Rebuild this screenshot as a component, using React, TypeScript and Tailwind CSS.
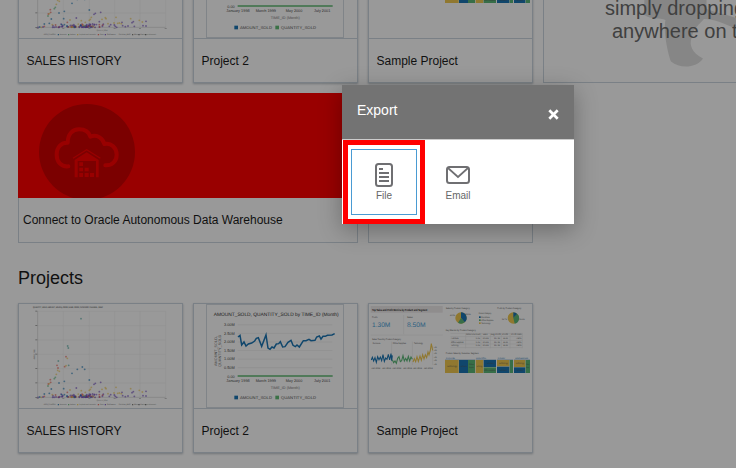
import type { ReactNode } from 'react';

const BLUE = '#1b76b4';
const GREEN = '#5cb878';
const YELLOW = '#f0c850';
const RED = '#ee5b4e';
const PURPLE = '#7048bf';
const TEAL = '#4fa8a0';

type Dot = [number, number, string];

// Outlying products of the sales scatter plot.
const outliers: Dot[] = [
  [213, 176, TEAL], [173, 258, TEAL], [175, 264, TEAL], [168, 290, RED], [172, 295, YELLOW],
  [145, 303, TEAL], [141, 316, RED], [144, 324, RED], [164, 320, RED], [168, 317, YELLOW],
  [176, 316, TEAL], [217, 321, BLUE], [224, 328, BLUE], [202, 328, BLUE], [186, 340, BLUE],
  [148, 334, YELLOW], [143, 331, YELLOW], [139, 343, YELLOW], [136, 352, GREEN], [133, 356, GREEN],
  [121, 359, RED], [122, 367, RED], [115, 372, RED], [118, 371, YELLOW], [114, 378, GREEN],
  [147, 369, BLUE], [163, 364, BLUE], [238, 360, BLUE], [161, 386, BLUE], [124, 387, BLUE],
  [118, 400, BLUE], [103, 402, BLUE], [272, 367, PURPLE], [256, 370, PURPLE], [252, 373, PURPLE],
  [244, 382, YELLOW], [241, 388, YELLOW], [238, 391, YELLOW], [199, 384, PURPLE], [180, 390, YELLOW],
  [318, 382, YELLOW], [288, 386, YELLOW], [276, 388, YELLOW], [286, 383, YELLOW], [362, 386, YELLOW],
  [388, 391, YELLOW], [397, 396, YELLOW], [408, 394, PURPLE], [370, 395, PURPLE], [366, 398, PURPLE],
  [336, 397, PURPLE], [214, 392, YELLOW], [328, 399, YELLOW], [334, 401, YELLOW], [312, 399, YELLOW],
  [323, 400, YELLOW], [172, 397, RED], [127, 404, YELLOW], [226, 397, YELLOW], [268, 395, PURPLE],
  [408, 408, PURPLE], [399, 407, PURPLE], [373, 409, PURPLE], [354, 408, PURPLE], [346, 410, PURPLE],
  [338, 407, PURPLE], [316, 409, PURPLE], [313, 405, PURPLE], [302, 404, PURPLE], [298, 409, PURPLE],
  [294, 401, YELLOW], [320, 412, PURPLE], [84, 412, PURPLE], [89, 411, BLUE], [94, 412, YELLOW],
  [99, 411, PURPLE], [103, 409, RED],
];

// Dense band of low-volume products along the horizontal axis.
const band: Dot[] = Array.from({ length: 95 }, (_, i): Dot => {
  const tones = [PURPLE, PURPLE, RED, PURPLE, BLUE, YELLOW, PURPLE];
  const noise = Math.abs(Math.sin(i * 12.9898) * 43758.5453) % 1;
  const lift = Math.abs(Math.sin(i * 78.233) * 12543.123) % 1;
  const x = i < 60 ? 128 + noise * 152 : 180 + noise * 75;
  return [x, 412 - lift * lift * 10, tones[i % 7]];
});

function ScatterThumb() {
  return (
    <svg viewBox="27 132 489 312" className="block h-[104px] w-[163px]" fontFamily="Liberation Sans, Arial, sans-serif" textRendering="geometricPrecision">
      <g stroke="#f2f2f2" strokeWidth="2">
        {[154, 197, 240, 283, 326, 369].map((y) => <path key={y} d={`M82 ${y}H467`} />)}
        {[160, 238, 314, 390, 467].map((x) => <path key={x} d={`M${x} 154V412`} />)}
      </g>
      <path d="M83 154V412H467" fill="none" stroke="#d4d4d4" strokeWidth="2" />
      <g fill="#aaa">
        {[153, 196, 239, 282, 325, 368, 412].map((y) => <rect key={y} x="76" y={y - 1} width="6" height="3" />)}
        {[83, 160, 238, 314, 390, 467].map((x) => <rect key={x} x={x - 3} y="415" width="6" height="2" />)}
      </g>
      <text x="69" y="145" fontSize="7" fontWeight="bold" fill="#666" textLength="210" lengthAdjust="spacingAndGlyphs">QUANTITY_SOLD, AMOUNT_SOLD by PROD_NAME, PROD_CATEGORY, CHANNEL_DESC</text>
      <text x="260" y="424" fontSize="6" fill="#777" textLength="32" lengthAdjust="spacingAndGlyphs">QUANTITY_SOLD</text>
      <text transform="translate(76 298) rotate(-90)" fontSize="6" fill="#888" textLength="30" lengthAdjust="spacingAndGlyphs">AMOUNT_SOLD</text>
      {[...band, ...outliers].map(([x, y, c], i) => <circle key={i} cx={x} cy={y} r="2.8" fill={c} opacity="0.62" />)}
      <g fontSize="6" fill="#777">
        <text x="101" y="436" textLength="37" lengthAdjust="spacingAndGlyphs">PROD_CATEGORY</text>
        <text x="149" y="436" textLength="21" lengthAdjust="spacingAndGlyphs">Electronics</text>
        <text x="180" y="436" textLength="17" lengthAdjust="spacingAndGlyphs">Hardware</text>
        <text x="207" y="436" textLength="51" lengthAdjust="spacingAndGlyphs">Peripherals and Accessories</text>
        <text x="269" y="436" textLength="12" lengthAdjust="spacingAndGlyphs">Photo</text>
        <text x="290" y="436" textLength="27" lengthAdjust="spacingAndGlyphs">Software</text>
        <text x="326" y="436" textLength="36" lengthAdjust="spacingAndGlyphs">CHANNEL_DESC</text>
        <text x="372" y="436" textLength="66" lengthAdjust="spacingAndGlyphs">Direct Partners Internet</text>
      </g>
      <g>
        {([[145, BLUE], [176, GREEN], [203, YELLOW], [265, RED], [286, PURPLE], [368, '#666'], [387, '#666'], [407, '#666']] as [number, string][]).map(([x, c]) => (
          <circle key={x} cx={x} cy="434" r="2" fill={c} />
        ))}
      </g>
    </svg>
  );
}

function LineThumb() {
  const ticks = ['3.00M', '2.50M', '2.00M', '1.50M', '1.00M', '0.50M', '0.00'];
  return (
    <svg viewBox="27 27 489 312" className="block h-[104px] w-[163px]" fontFamily="Liberation Sans, Arial, sans-serif" textRendering="geometricPrecision">
      <rect x="64.500" y="28.500" width="411" height="309" fill="#fff" stroke="#d5dde3" strokeWidth="3" />
      <text x="86" y="63" fontSize="14.500" fill="#333" textLength="375" lengthAdjust="spacingAndGlyphs">AMOUNT_SOLD, QUANTITY_SOLD by TIME_ID (Month)</text>
      {ticks.map((t, i) => (
        <g key={t}>
          <path d={`M158 ${89.500 + i * 25.7}H442`} stroke="#ebebeb" strokeWidth="2" />
          <text x="149" y={93.500 + i * 25.7} textAnchor="end" fontSize="11.500" fill="#4a4a4a">{t}</text>
        </g>
      ))}
      <g fill="#777" fontSize="11">
        <text transform="translate(96 213) rotate(-90)" textLength="90" lengthAdjust="spacingAndGlyphs">AMOUNT_SOLD,</text>
        <text transform="translate(109 216) rotate(-90)" textLength="97" lengthAdjust="spacingAndGlyphs">QUANTITY_SOLD</text>
        <text x="257" y="281" textLength="87" lengthAdjust="spacingAndGlyphs">TIME_ID (Month)</text>
      </g>
      <g fill="#4a4a4a" fontSize="11.500">
        <text x="124" y="262" textLength="70" lengthAdjust="spacingAndGlyphs">January 1998</text>
        <text x="212" y="262" textLength="61" lengthAdjust="spacingAndGlyphs">March 1999</text>
        <text x="302" y="262" textLength="50" lengthAdjust="spacingAndGlyphs">May 2000</text>
        <text x="387" y="262" textLength="49" lengthAdjust="spacingAndGlyphs">July 2001</text>
      </g>
      <path d="M158 243H443" stroke="#62bd75" strokeWidth="4.500" />
      <path d="M159 126l6-5 5 29 7-9 6 12 7-6 10-3 9-6 5-8 6-2 10 26 13-34 6 39 6 4 6-7 6 3 7-12 7-1 5-6 7 16 7-1 9-13 9-6 6 15 7 4 5-5 7 6 12-19 8 0 9-4 6 4 12-1 5-10 8-3 5 9 6-8 7 0 6-3 14-1 8-4" fill="none" stroke={BLUE} strokeWidth="4.500" />
      <rect x="148" y="302" width="11" height="11" fill={BLUE} />
      <rect x="271" y="302" width="11" height="11" fill="#62bd75" />
      <g fontSize="12" fill="#555">
        <text x="165" y="311" textLength="96" lengthAdjust="spacingAndGlyphs">AMOUNT_SOLD</text>
        <text x="288" y="311" textLength="105" lengthAdjust="spacingAndGlyphs">QUANTITY_SOLD</text>
      </g>
    </svg>
  );
}

type Tile = [number, number, number, number, string];
const tiles: Tile[] = [
  [255, 195, 41, 39, YELLOW], [297, 195, 27, 39, BLUE], [324, 195, 21, 39, GREEN],
  [347, 195, 23, 39, YELLOW], [371, 195, 37, 21, BLUE], [371, 217, 37, 17, GREEN],
  [411, 195, 37, 19, YELLOW], [411, 215, 37, 19, BLUE], [449, 195, 10, 39, GREEN],
  [462, 195, 34, 21, YELLOW], [462, 217, 34, 17, BLUE], [497, 195, 13, 39, GREEN],
];

function MiniLabel({ x, y, w, children, size = 7.5 }: { x: number; y: number; w: number; children: string; size?: number }) {
  return <text x={x} y={y} fontSize={size} fill="#555" textLength={w} lengthAdjust="spacingAndGlyphs">{children}</text>;
}

function DashboardThumb() {
  return (
    <svg viewBox="27 27 489 312" className="block h-[104px] w-[163px]" fontFamily="Liberation Sans, Arial, sans-serif" textRendering="geometricPrecision">
      <rect x="32" y="33" width="216" height="20" fill="#efebec" />
      <text x="36" y="48" fontSize="9" fontWeight="bold" fill="#111" textLength="166" lengthAdjust="spacingAndGlyphs">Top Sales and Profit Metrics by Product and Segment</text>
      <MiniLabel x={36} y={70} w={16}>Profit</MiniLabel>
      <MiniLabel x={141} y={70} w={17}>Sales</MiniLabel>
      <path d="M131 60V118M32 120H248" stroke="#eeeeee" strokeWidth="2" />
      <g fontSize="20" fill="#4a9fd8">
        <text x="36" y="96" textLength="55" lengthAdjust="spacingAndGlyphs">1.30M</text>
        <text x="141" y="96" textLength="56" lengthAdjust="spacingAndGlyphs">8.50M</text>
      </g>
      <MiniLabel x={36} y={135} w={87}>Sales Trend by Product Category</MiniLabel>
      <MiniLabel x={38} y={148} w={23}>Furniture</MiniLabel>
      <MiniLabel x={98} y={148} w={40}>Office Supplies</MiniLabel>
      <MiniLabel x={162} y={148} w={27}>Technology</MiniLabel>
      <path d="M95 140V210M157 140V210M218 154V210" stroke="#e5e5e5" strokeWidth="1.500" />
      <g fill="none" strokeWidth="3.200">
        <path stroke={BLUE} d="M34 195l3-8 4 11 4-10 4 14 4-17 4 9 4-8 4 11 4-18 4 20 4-10 4 4 4-15 4 17 4-19 2 21 2-16" />
        <path stroke={GREEN} d="M97 194l4 9 4-5 4 7 4-15 4-5 4 15 4-3 4-15 4 16 4-8 4 8 4-14 4 14 4-12 4 7" />
        <path stroke={YELLOW} d="M159 201l4-10 4 9 4-15 4 14 5-16 4 13 4-17 4 13 4-13 4 9 4-17 3 9 4-14 3-20 4 20" />
      </g>
      {[158, 168, 178, 188, 199, 210].map((y) => <MiniLabel key={y} x={222} y={y} w={9} size={6}>50K</MiniLabel>)}
      {[34, 66, 97, 129, 159, 191].map((x) => <MiniLabel key={x} x={x} y={222} w={27} size={7}>Jan 2013</MiniLabel>)}

      <MiniLabel x={257} y={41} w={72}>Sales by Product Category</MiniLabel>
      <MiniLabel x={412} y={41} w={72}>Profit by Product Category</MiniLabel>
      <circle cx="303" cy="69" r="17" fill={YELLOW} />
      <path d="M303 69V52A17 17 0 0 1 314 82Z" fill={BLUE} />
      <path d="M303 69L314 82A17 17 0 0 1 294 83Z" fill={GREEN} />
      <circle cx="460" cy="69" r="17" fill={YELLOW} />
      <path d="M460 69V52A17 17 0 0 1 472 57Z" fill={BLUE} />
      <path d="M460 69L472 57A17 17 0 0 1 464 86Z" fill={GREEN} />
      <MiniLabel x={270} y={63} w={15} size={6.5}>40.2%</MiniLabel>
      <MiniLabel x={316} y={59} w={16} size={6.5}>33.1%</MiniLabel>
      <MiniLabel x={426} y={74} w={15} size={6.5}>54.7%</MiniLabel>
      <MiniLabel x={478} y={74} w={16} size={6.5}>36.6%</MiniLabel>
      <MiniLabel x={356} y={58} w={38} size={6.5}>Product Category</MiniLabel>
      {([[67, BLUE, 'Furniture', 25], [76, GREEN, 'Office Supplies', 36], [85, YELLOW, 'Technology', 27]] as [number, string, string, number][]).map(([y, c, label, w]) => (
        <g key={label}>
          <rect x="357" y={y - 3} width="5" height="5" fill={c} />
          <MiniLabel x={364} y={y + 2} w={w} size={6.5}>{label}</MiniLabel>
        </g>
      ))}
      <MiniLabel x={257} y={108} w={90}>Key Metrics by Product Category</MiniLabel>
      <path d="M271 115H487M271 125H487M271 136H487M271 147H487M271 158H487M317 114V160M363 114V160M391 114V160M424 114V160M450 114V160M487 114V160" stroke="#e4e4e4" strokeWidth="1.500" />
      {([[319, 42, 'Order Line Count'], [368, 14, 'Sales'], [392, 30, 'Avg Profit'], [427, 17, 'Profit'], [454, 32, 'Profit Ratio']] as [number, number, string][]).map(([x, w, label]) => (
        <MiniLabel key={label} x={x} y={121} w={w} size={7}>{label}</MiniLabel>
      ))}
      {['Furniture', 'Office Supplies', 'Technology'].map((label, row) => (
        <g key={label}>
          <MiniLabel x={273} y={132 + row * 11} w={row === 1 ? 37 : 23} size={7}>{label}</MiniLabel>
          <MiniLabel x={347} y={132 + row * 11} w={13} size={7}>1,725</MiniLabel>
          <MiniLabel x={368} y={132 + row * 11} w={18} size={7}>3,178K</MiniLabel>
          <MiniLabel x={402} y={132 + row * 11} w={18} size={7}>117.2K</MiniLabel>
          <MiniLabel x={430} y={132 + row * 11} w={14} size={7}>45.1K</MiniLabel>
          <MiniLabel x={468} y={132 + row * 11} w={16} size={7}>7.60%</MiniLabel>
        </g>
      ))}
      <MiniLabel x={257} y={177} w={99}>Product Sales by Customer Segment</MiniLabel>
      <g fill="#2878b8" fontSize="7">
        <text x="258" y="191" textLength="27" lengthAdjust="spacingAndGlyphs">Corporate</text>
        <text x="348" y="191" textLength="30" lengthAdjust="spacingAndGlyphs">Home Office</text>
        <text x="413" y="191" textLength="22" lengthAdjust="spacingAndGlyphs">Consumer</text>
        <text x="465" y="191" textLength="39" lengthAdjust="spacingAndGlyphs">Small Business</text>
      </g>
      <path d="M255 194H345M347 194H408M411 194H459M462 194H510" stroke="#8fb7d6" strokeWidth="1.500" />
      {tiles.map(([x, y, w, h, c]) => <rect key={`${x}-${y}`} x={x} y={y} width={w} height={h} fill={c} />)}
      <MiniLabel x={260} y={217} w={31} size={7}>Technology</MiniLabel>
      <MiniLabel x={300} y={217} w={21} size={7}>Furniture</MiniLabel>
      <MiniLabel x={327} y={211} w={15} size={6}>Office</MiniLabel>
      <MiniLabel x={327} y={220} w={15} size={6}>Supplies</MiniLabel>
      <MiniLabel x={349} y={217} w={18} size={7}>Technology</MiniLabel>
      <MiniLabel x={379} y={208} w={22} size={7}>Furniture</MiniLabel>
      <MiniLabel x={373} y={228} w={33} size={7}>Office Supplies</MiniLabel>
      <MiniLabel x={416} y={207} w={28} size={7}>Technology</MiniLabel>
      <MiniLabel x={418} y={228} w={22} size={7}>Furniture</MiniLabel>
      <MiniLabel x={466} y={208} w={26} size={7}>Technology</MiniLabel>
      <MiniLabel x={469} y={228} w={20} size={7}>Furniture</MiniLabel>
      <MiniLabel x={499} y={210} w={9} size={6}>Office</MiniLabel>
      <MiniLabel x={499} y={219} w={9} size={6}>Supp.</MiniLabel>
    </svg>
  );
}

function ProjectCard({ title, children }: { title: string; children: ReactNode }) {
  return (
    <article className="flex h-[150px] w-[165px] shrink-0 flex-col border border-[#cbd6df] bg-white shadow-[0_1px_2px_rgba(60,80,95,0.35)]">
      {children}
      <div className="flex flex-1 items-center border-t border-[#cbd6df] px-[7.5px] pt-px text-xs">{title}</div>
    </article>
  );
}

function ProjectCards() {
  return (
    <>
      <ProjectCard title="SALES HISTORY"><ScatterThumb /></ProjectCard>
      <ProjectCard title="Project 2"><LineThumb /></ProjectCard>
      <ProjectCard title="Sample Project"><DashboardThumb /></ProjectCard>
    </>
  );
}

function WarehouseLogo() {
  return (
    <svg viewBox="87 56 288 288" className="ml-[21px] mt-[11px] block size-24 shrink-0">
      <circle cx="231" cy="200" r="144" fill="#cd0000" />
      <path d="M175 243C153 245 140 229 140 208C140 184 155 171 173 172C173 146 188 132 207 132C225 132 237 141 241 154C263 145 279 161 283 176C304 171 320 188 320 208C320 228 306 241 286 240" fill="none" stroke="#ff0000" strokeWidth="12" strokeLinecap="round" strokeLinejoin="round" />
      <path d="M189 219L230 193L271 219" fill="none" stroke="#ff0000" strokeWidth="3.500" />
      <path d="M194 224L230 201L266 224V276H258V227H203V276H194Z" fill="#ff0000" />
      <path d="M208 231h11v11h-11zM208 247h11v11h-11zM224 247h12v11h-12zM208 263h11v12h-11zM224 263h12v12h-12zM240 263h12v12h-12z" fill="#ff0000" />
    </svg>
  );
}

function DropPanel() {
  return (
    <aside className="h-[150px] w-[360px] shrink-0 overflow-hidden border border-[#cbd6df] bg-white">
      <div className="grid">
        <svg viewBox="0 0 200 83" className="col-start-1 row-start-1 ml-[-8px] mt-[66px] block h-[83px] w-[200px]">
          <path d="M108.300 0V15C115 20 124 17 129.500 20C127 31 132 54 135 61.500C145 70 162 67 167 58.500C156 53 153 45 155.500 38C158 27 163 25 168 19C177 19 188 23 200 29V18C190 14 180 13 170.500 9V0Z" fill="#e0e0e0" />
        </svg>
        <div className="col-start-1 row-start-1 mt-[63px] whitespace-nowrap text-[20px] leading-[23px] text-[#6b6b6b]">
          <p className="pl-[61px]">simply dropping them</p>
          <p className="pl-[68px]">anywhere on the page</p>
        </div>
      </div>
    </aside>
  );
}

function ExportDialog() {
  return (
    <section role="dialog" aria-label="Export" className="absolute left-[342px] top-[85px] flex h-[139px] w-[232px] flex-col bg-white shadow-[0_6px_22px_rgba(0,0,0,0.3)]">
      <header className="flex h-[55px] shrink-0 items-center justify-between border-b border-[#cccccc] bg-[#737373] pl-[15px] pr-[15px]">
        <h2 className="mb-1 text-sm leading-4 text-white">Export</h2>
        <button aria-label="Close" className="mt-1 block">
          <svg viewBox="0 0 11 11" className="block size-[11px]" stroke="#fff" strokeWidth="2.700">
            <path d="M1.300 1.300L9.700 9.700M9.700 1.300L1.300 9.700" />
          </svg>
        </button>
      </header>
      <div className="flex pl-px">
        <div className="h-[84px] w-[82px] border-[5px] border-[#ff0000] p-[3px] pt-[4px]">
          <button className="flex size-[66px] flex-col items-center border border-[#4a9bd3] pt-[13px] text-[10px] leading-3 text-[#666666]">
            <svg viewBox="0 0 18 24" className="mb-[3px] block h-6 w-[18px]" fill="none" stroke="#6f6f72" strokeWidth="2">
              <rect x="1" y="1" width="16" height="22" rx="2.500" />
              <path d="M4 6H8M4 10H14M4 14H14M4 18H14" />
            </svg>
            File
          </button>
        </div>
        <button className="flex h-[84px] w-[66px] flex-col items-center pt-[26px] text-[10px] leading-3 text-[#666666]">
          <svg viewBox="0 0 24 18" className="mb-[6px] block h-[18px] w-6" fill="none" stroke="#6f6f72" strokeWidth="2">
            <rect x="1" y="1" width="22" height="16" rx="2.500" />
            <path d="M2 2L12 11L22 2" strokeWidth="1.700" />
          </svg>
          Email
        </button>
      </div>
    </section>
  );
}

export default function App() {
  return (
    <div className="relative h-[468px] w-full overflow-hidden bg-white font-['Liberation_Sans',Arial,sans-serif] text-[#1c1c1c]">
      <main className="mt-[-67px] pl-[18px]">
        <div className="flex gap-[10px]">
          <ProjectCards />
          <DropPanel />
        </div>
        <div className="mt-[10px] flex gap-[10px]">
          <article className="flex h-[150px] w-[340px] flex-col">
            <div className="h-[105px] shrink-0 overflow-hidden bg-[#ff0000]"><WarehouseLogo /></div>
            <div className="flex flex-1 items-center border border-t-0 border-[#cbd6df] pl-1 text-xs">Connect to Oracle Autonomous Data Warehouse</div>
          </article>
          <div className="h-[150px] w-[165px] border border-[#cbd6df]" />
        </div>
        <h1 className="mt-[25px] text-lg leading-5">Projects</h1>
        <div className="mt-[15px] flex gap-[10px]"><ProjectCards /></div>
      </main>
      <div className="absolute inset-0 bg-black/40" />
      <ExportDialog />
    </div>
  );
}
